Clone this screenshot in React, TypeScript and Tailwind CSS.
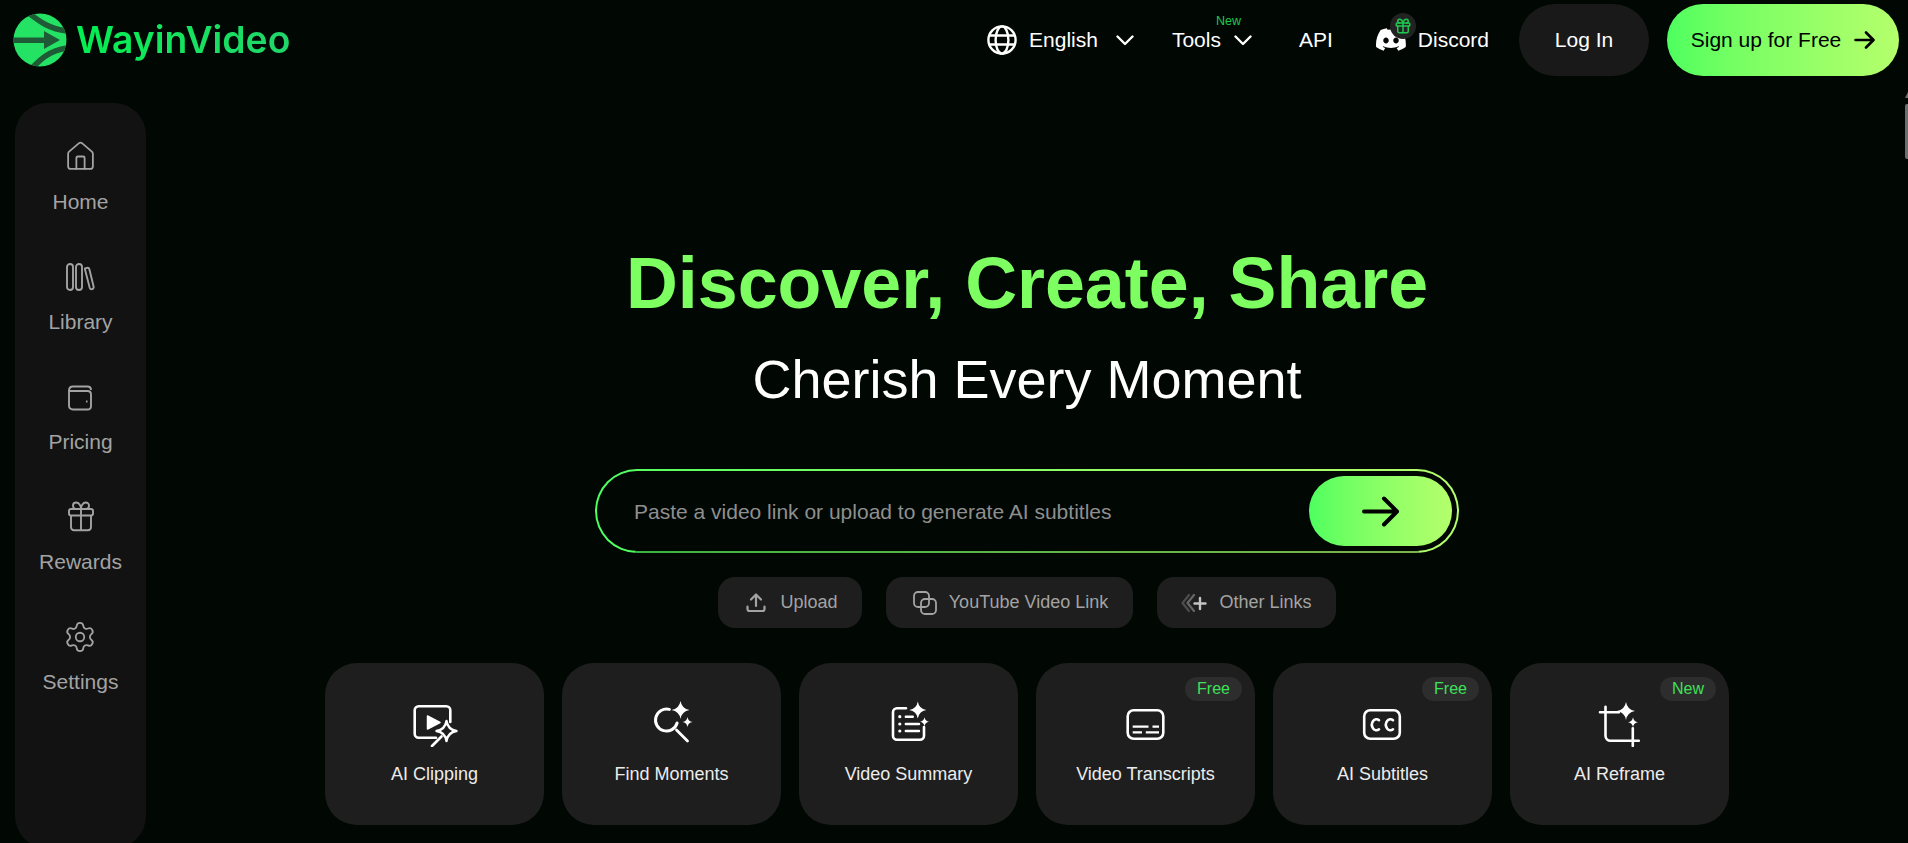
import { Gift, House, Settings } from "lucide-react";
import type { ReactNode } from "react";

// four-point sparkle used by most of the tool icons
const spark = (cx: number, cy: number, r: number) => {
  const k = r * 0.14;
  return `M${cx} ${cy - r}Q${cx + k} ${cy - k} ${cx + r} ${cy}Q${cx + k} ${cy + k} ${cx} ${cy + r}Q${cx - k} ${cy + k} ${cx - r} ${cy}Q${cx - k} ${cy - k} ${cx} ${cy - r}Z`;
};

function Logo() {
  return (
    <svg width="54" height="54" viewBox="0 0 54 54">
      <clipPath id="logo-clip">
        <circle cx="27" cy="27" r="26.5" />
      </clipPath>
      <circle cx="27" cy="27" r="26.5" fill="#24e364" />
      <g clipPath="url(#logo-clip)" fill="none" stroke="#1e5a36" strokeWidth="5.5">
        <path d="M17 1C26 8 36 16 54 18" />
        <path d="M20 54C28 46 36 38 54 35" />
      </g>
      <path d="M0 24.5h31V18l16 9-16 9v-6H0z" fill="#1e5a36" />
    </svg>
  );
}

function Chevron() {
  return (
    <svg width="18" height="11" viewBox="0 0 18 11" fill="none" stroke="#fff" strokeWidth="2.4" strokeLinecap="round" strokeLinejoin="round">
      <path d="M1.5 1.5L9 9l7.5-7.5" />
    </svg>
  );
}

function GlobeIcon() {
  return (
    <svg width="30" height="30" viewBox="0 0 30 30" fill="none" stroke="#fff" strokeWidth="2.4">
      <circle cx="15" cy="15" r="13.6" />
      <ellipse cx="15" cy="15" rx="6.4" ry="13.6" />
      <path d="M2.5 10.5h25M2.5 19.5h25" />
    </svg>
  );
}

function Discord() {
  return (
    <svg width="30" height="24" viewBox="0 0 24 19" fill="#fff">
      <path d="M20.3 1.5A19.8 19.8 0 0 0 15.4 0c-.2.4-.5.9-.6 1.3a18.3 18.3 0 0 0-5.5 0C9.1.9 8.8.4 8.6 0a19.7 19.7 0 0 0-4.9 1.5C.6 6.1-.3 10.6.1 15a19.9 19.9 0 0 0 6 3c.5-.7.9-1.4 1.3-2.1-.7-.3-1.4-.6-2-1l.5-.4c3.9 1.8 8.2 1.8 12.1 0l.5.4c-.6.4-1.3.7-2 1 .4.7.8 1.4 1.3 2.1a19.9 19.9 0 0 0 6-3c.5-5.1-.8-9.5-3.5-13.5zM8 12.3c-1.2 0-2.2-1.1-2.2-2.4S6.8 7.5 8 7.5s2.2 1.1 2.2 2.4-1 2.4-2.2 2.4zm8 0c-1.2 0-2.2-1.1-2.2-2.4s1-2.4 2.2-2.4 2.2 1.1 2.2 2.4-1 2.4-2.2 2.4z" />
    </svg>
  );
}

function Arrow({ big }: { big?: boolean }) {
  if (big) {
    return (
      <svg width="38" height="31" viewBox="0 0 38 31" fill="none" stroke="#000" strokeWidth="4" strokeLinecap="round" strokeLinejoin="round">
        <path d="M2 15.5h33M22 2.5l13 13-13 13" />
      </svg>
    );
  }
  return (
    <svg width="21" height="18" viewBox="0 0 21 18" fill="none" stroke="#000" strokeWidth="2.6" strokeLinecap="round" strokeLinejoin="round">
      <path d="M1.5 9H19M12 1.5L19.5 9 12 16.5" />
    </svg>
  );
}

function Library() {
  return (
    <svg width="32" height="32" viewBox="0 0 32 32" fill="none" stroke="#a3a3a3" strokeWidth="1.9" className="translate-y-[1px]">
      <rect x="3" y="3" width="6" height="26" rx="3" />
      <rect x="12" y="3" width="6" height="26" rx="3" />
      <path d="M21 7.5l2-.6c1.2-.3 2 .2 2.3 1.2l4.3 17.5c.3 1.3-.3 2.2-1.4 2.5-1.1.3-2.1-.2-2.5-1.4L21 8.5z" />
    </svg>
  );
}

function Wallet() {
  return (
    <svg width="32" height="32" viewBox="0 0 32 32" fill="none" stroke="#a3a3a3" strokeWidth="1.9" className="translate-y-[2px]">
      <path d="M5 9c0-3 1.5-4.500 4-4.500h14.500c2 0 3.500 1.500 3.500 3.500" />
      <path d="M5 9h18.500c2 0 3.500 1.500 3.500 3.500V24c0 2-1.500 3.500-3.500 3.500H9c-2.500 0-4-1.500-4-4z" />
      <path d="M22 19.5h1.5" />
    </svg>
  );
}

function SideGift() {
  return (
    <svg width="32" height="32" viewBox="0 0 32 32" fill="none" stroke="#a3a3a3" strokeWidth="1.9">
      <rect x="4" y="9" width="24" height="6.5" rx="2" />
      <path d="M6 15.5V27c0 2 1.2 3.2 3.2 3.2h13.600c2 0 3.200-1.200 3.200-3.200V15.500" />
      <path d="M16 9v21" />
      <path d="M16 9h-4c-2.500 0-4-1.500-4-3.300C8 3.800 9.500 2.500 11.200 2.500 14 2.500 16 5.500 16 9zM16 9h4c2.500 0 4-1.500 4-3.300 0-1.900-1.500-3.200-3.200-3.200C18 2.500 16 5.500 16 9z" />
    </svg>
  );
}

function UploadIcon() {
  return (
    <svg width="26" height="20" viewBox="-4 0 26 20" fill="none" stroke="#a3a3a3" strokeWidth="2.2" strokeLinecap="round" strokeLinejoin="round">
      <path d="M10 13V2M5 6.5L10 1.5l5 5" />
      <path d="M1.5 13.5V16a2 2 0 0 0 2 2h13a2 2 0 0 0 2-2v-2.5" />
    </svg>
  );
}

function CopyIcon() {
  return (
    <svg width="26" height="24" viewBox="-2 0 26 24" fill="none" stroke="#a3a3a3" strokeWidth="1.8">
      <rect x="1" y="1" width="15" height="15" rx="4" />
      <rect x="8" y="8" width="15" height="15" rx="4" />
    </svg>
  );
}

function OtherLinks() {
  return (
    <svg width="26" height="20" viewBox="0 0 26 20" fill="none" strokeLinecap="round" strokeLinejoin="round">
      <path d="M8 2L1.5 10 8 18" stroke="#4d4d4d" strokeWidth="2.2" />
      <path d="M13 2L6.5 10l6.5 8" stroke="#666" strokeWidth="2.2" />
      <path d="M19 5v11M13.5 10.5h11" stroke="#c4c4c4" strokeWidth="2.4" />
    </svg>
  );
}

function ToolIcon({ children }: { children: ReactNode }) {
  return (
    <svg width="46" height="46" viewBox="0 0 46 46" fill="none" stroke="#fff" strokeWidth="2.6" strokeLinecap="round" strokeLinejoin="round">
      {children}
    </svg>
  );
}

const clipIcon = (
  <ToolIcon>
    <path d="M38.3 21V9.2a4 4 0 0 0-4-4H6.7a4 4 0 0 0-4 4v23.6a4 4 0 0 0 4 4H24" />
    <path d="M15.5 15L28 21.5 15.5 28z" fill="#fff" strokeWidth="1.5" />
    <path d={spark(34.5, 30, 10)} fill="#1e1e1e" strokeWidth="2.4" />
    <path d="M20 45l9.5-9.5" />
  </ToolIcon>
);

const findIcon = (
  <ToolIcon>
    <path d="M20.4 8.4A11 11 0 1 0 28.1 22" strokeWidth="3" />
    <path d="M27.5 29l11 11" strokeWidth="2.8" />
    <path d={spark(31.5, 9, 9)} fill="#fff" stroke="none" />
    <path d={spark(38.5, 21, 5)} fill="#fff" stroke="none" />
  </ToolIcon>
);

const summaryIcon = (
  <ToolIcon>
    <path d="M20 7.2H11a4 4 0 0 0-4 4v23.6a4 4 0 0 0 4 4h23a4 4 0 0 0 4-4V26" />
    <circle cx="13.8" cy="15.7" r="1.6" fill="#fff" stroke="none" />
    <circle cx="13.8" cy="23" r="1.6" fill="#fff" stroke="none" />
    <circle cx="13.8" cy="30" r="1.6" fill="#fff" stroke="none" />
    <path d="M19.8 15.7h7M19.8 23H33M19.8 30H33" strokeWidth="2.4" />
    <path d={spark(31.8, 9, 8.5)} fill="#fff" stroke="none" />
    <path d={spark(38.5, 20.7, 4.5)} fill="#fff" stroke="none" />
  </ToolIcon>
);

const transcriptIcon = (
  <ToolIcon>
    <rect x="4.7" y="9.2" width="35.6" height="28.6" rx="6" />
    <path d="M9.7 25.7h15.8M29.5 25.7H36M9.7 31.3H19M22.8 31.3H36" strokeWidth="2.2" strokeLinecap="butt" />
  </ToolIcon>
);

const ccIcon = (
  <ToolIcon>
    <rect x="4.2" y="9.2" width="35.6" height="28.6" rx="6" />
    <path d="M19 19.2A4.5 5.5 0 1 0 19 28.3M33 19.2A4.5 5.5 0 1 0 33 28.3" />
  </ToolIcon>
);

const reframeIcon = (
  <ToolIcon>
    <path d="M3 11.3h19M8.5 5.7v29a5 5 0 0 0 5 5h28.300M35.800 27.300V45" />
    <path d={spark(29, 10, 9)} fill="#fff" stroke="none" />
    <path d={spark(36, 21.3, 5)} fill="#fff" stroke="none" />
  </ToolIcon>
);

const navItems: { label: string; icon: ReactNode }[] = [
  { label: "Home", icon: <House size={33} strokeWidth={1.3} color="#a3a3a3" /> },
  { label: "Library", icon: <Library /> },
  { label: "Pricing", icon: <Wallet /> },
  { label: "Rewards", icon: <SideGift /> },
  { label: "Settings", icon: <Settings size={34} strokeWidth={1.25} color="#a3a3a3" className="translate-y-[1px]" /> },
];

const tools: { label: string; icon: ReactNode; badge?: string }[] = [
  { label: "AI Clipping", icon: clipIcon },
  { label: "Find Moments", icon: findIcon },
  { label: "Video Summary", icon: summaryIcon },
  { label: "Video Transcripts", icon: transcriptIcon, badge: "Free" },
  { label: "AI Subtitles", icon: ccIcon, badge: "Free" },
  { label: "AI Reframe", icon: reframeIcon, badge: "New" },
];

function Chip({ icon, label, width }: { icon: ReactNode; label: string; width: string }) {
  return (
    <div className={`flex h-[51px] items-center justify-center gap-[12px] rounded-[17px] bg-[#1e1e1e] text-[18px] text-[#a3a3a3] ${width}`}>
      {icon}
      <span>{label}</span>
    </div>
  );
}

export default function App() {
  return (
    <div className="relative h-[843px] w-[1908px] overflow-hidden bg-[#010703] font-['Liberation_Sans',Arial,sans-serif]">
      <header className="flex h-[80px] items-center justify-between pl-[13px] pr-[9px]">
        <div className="flex items-center gap-[9px]">
          <Logo />
          <span className="bg-gradient-to-r from-[#00f050] to-[#1fd66a] bg-clip-text font-['Inter',sans-serif] text-[37.3px] font-semibold text-transparent">
            WayinVideo
          </span>
        </div>
        <div className="flex items-center text-[21px] text-white">
          <GlobeIcon />
          <span className="ml-[12px]">English</span>
          <span className="ml-[18px]">
            <Chevron />
          </span>
          <div className="relative ml-[38px] flex items-center">
            <span>Tools</span>
            <span className="ml-[13px]">
              <Chevron />
            </span>
            <span className="absolute left-[44px] top-[-9px] text-[12.5px] leading-[12px] text-[#1fc74f]">New</span>
          </div>
          <span className="ml-[47px]">API</span>
          <div className="relative ml-[43px] mr-[12px]">
            <Discord />
            <span className="absolute left-[14px] top-[-15px] flex h-[26px] w-[26px] items-center justify-center rounded-full bg-[#222]">
              <Gift size={18} strokeWidth={2} color="#1fc74f" />
            </span>
          </div>
          <span>Discord</span>
          <div className="ml-[30px] flex h-[72px] w-[130px] items-center justify-center rounded-full bg-[#191919]">
            Log In
          </div>
          <div className="ml-[18px] flex h-[72px] w-[232px] items-center justify-center gap-[13px] rounded-full bg-gradient-to-r from-[#4dff5f] to-[#b4ff6c] text-black">
            <span>Sign up for Free</span>
            <Arrow />
          </div>
        </div>
      </header>

      <div className="flex">
        <aside className="ml-[15px] mt-[23px] flex h-[745px] w-[131px] shrink-0 flex-col items-center rounded-[32px] bg-[#121212] pt-[37px]">
          {navItems.map((item) => (
            <div key={item.label} className="flex h-[120px] flex-col items-center text-[21px] leading-[30px] text-[#a3a3a3]">
              <div className="flex h-[32px] items-center justify-center">{item.icon}</div>
              <span className="mt-[15px]">{item.label}</span>
            </div>
          ))}
        </aside>

        <main className="flex flex-1 flex-col items-center">
          <h1 className="mt-[161px] text-[71.8px] leading-[84px] font-bold text-[#7dff62]">Discover, Create, Share</h1>
          <h2 className="mt-[24px] text-[54px] leading-[60px] text-white">Cherish Every Moment</h2>

          <div className="relative mt-[60px] h-[84px] w-[864px] rounded-full bg-gradient-to-r from-[#4dff5f] to-[#b4ff6c] p-[2px]">
            <div className="flex h-full items-center justify-between rounded-full bg-[#010703] pl-[37px] pr-[5px]">
              <span className="mt-[2px] text-[21px] text-[#8f8f8f]">Paste a video link or upload to generate AI subtitles</span>
              <div className="flex h-[70px] w-[143px] items-center justify-center rounded-full bg-gradient-to-r from-[#4dff5f] to-[#b4ff6c]">
                <Arrow big />
              </div>
            </div>
            <span className="absolute bottom-0 left-[40px] right-[40px] h-[2px] bg-[#010703]/30" />
          </div>

          <div className="mt-[24px] flex gap-[24px]">
            <Chip width="w-[144px]" label="Upload" icon={<UploadIcon />} />
            <Chip width="w-[247px]" label="YouTube Video Link" icon={<CopyIcon />} />
            <Chip width="w-[179px]" label="Other Links" icon={<OtherLinks />} />
          </div>

          <div className="mt-[35px] flex gap-[18px]">
            {tools.map((tool) => (
              <div key={tool.label} className="relative flex h-[162px] w-[219px] flex-col items-center rounded-[32px] bg-[#1e1e1e] pt-[38px]">
                {tool.badge && (
                  <span className="absolute right-[13px] top-[14px] rounded-full bg-[#2d2d2d] px-[12px] text-[16px] leading-[24px] text-[#3fe05a]">
                    {tool.badge}
                  </span>
                )}
                <div className="flex h-[46px] items-center justify-center">{tool.icon}</div>
                <span className="mt-[14px] text-[18px] text-[#ececec]">{tool.label}</span>
              </div>
            ))}
          </div>
        </main>
      </div>

      <div className="absolute right-0 top-[92px] flex w-[3px] flex-col gap-[6px]">
        <span className="h-0 w-0 border-x-[3px] border-b-[6px] border-x-transparent border-b-[#6e6e6e]" />
        <span className="h-[55px] w-[3px] rounded-l-[2px] bg-[#6e6e6e]" />
      </div>
    </div>
  );
}
